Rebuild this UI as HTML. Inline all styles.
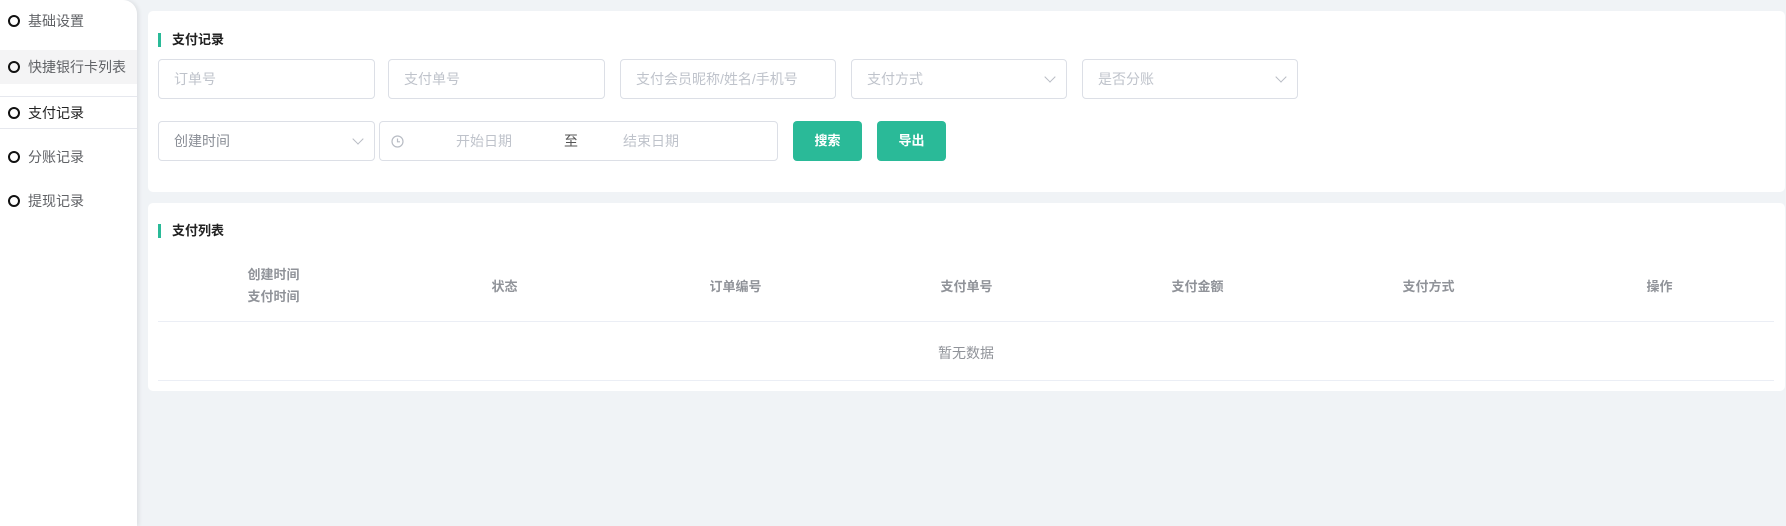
<!DOCTYPE html>
<html><head><meta charset="utf-8"><style>
*{box-sizing:border-box;margin:0;padding:0}
body{width:1786px;height:526px;background:#f0f3f6;font-family:"Liberation Sans","Noto Sans CJK SC",sans-serif;position:relative;overflow:hidden;font-size:14px}
.side{position:absolute;left:0;top:0;width:137px;height:526px;background:#fff;border-top-right-radius:14px;box-shadow:2px 0 4px rgba(0,0,0,.08)}
.it{position:absolute;left:0;width:137px;height:34px;line-height:34px;color:#606266;padding-left:28px}
.it i{position:absolute;left:8px;top:11px;width:12px;height:12px;border:2px solid #111;border-radius:50%}
.card{position:absolute;left:148px;width:1637px;background:#fff;border-radius:5px}
.tt{position:absolute;left:10px;font-weight:bold;color:#222;font-size:13px;padding-left:14px;line-height:14px}
.tt:before{content:"";position:absolute;left:0;top:0;width:3px;height:14px;background:#2aba98}
.in{position:absolute;height:40px;border:1px solid #dcdfe6;border-radius:4px;color:#bfc3cb;line-height:38px;padding-left:15px;font-size:14px}
.arr{position:absolute;right:12px;top:13px;width:8px;height:8px;border-right:1px solid #b8bcc4;border-bottom:1px solid #b8bcc4;transform:rotate(45deg)}
.btn{position:absolute;top:121px;height:40px;background:#2aba98;color:#fff;border-radius:4px;text-align:center;line-height:40px;font-size:13px;font-weight:bold}
.th{position:absolute;width:231px;text-align:center;color:#909399;font-weight:bold;font-size:13px}
.ln{position:absolute;left:10px;width:1616px;height:1px;background:#ebeef5}
</style></head><body>
<div class="side">
<div class="it" style="top:4px"><i></i>基础设置</div>
<div class="it" style="top:50px;background:#f4f4f5"><i></i>快捷银行卡列表</div>
<div style="position:absolute;left:0;top:96px;width:137px;height:1px;background:#e6e8ee"></div>
<div class="it" style="top:96px;color:#222"><i></i>支付记录</div>
<div style="position:absolute;left:0;top:128px;width:137px;height:1px;background:#e6e8ee"></div>
<div class="it" style="top:140px"><i></i>分账记录</div>
<div class="it" style="top:184px"><i></i>提现记录</div>
</div>
<div class="card" style="top:11px;height:181px">
<div class="tt" style="top:22px">支付记录</div>
</div>
<div class="in" style="left:158px;top:59px;width:217px">订单号</div>
<div class="in" style="left:388px;top:59px;width:217px">支付单号</div>
<div class="in" style="left:620px;top:59px;width:216px">支付会员昵称/姓名/手机号</div>
<div class="in" style="left:851px;top:59px;width:216px">支付方式<span class="arr"></span></div>
<div class="in" style="left:1082px;top:59px;width:216px">是否分账<span class="arr"></span></div>
<div class="in" style="left:158px;top:121px;width:217px;color:#8a8e96">创建时间<span class="arr"></span></div>
<div class="in" style="left:379px;top:121px;width:399px;padding:0">
<svg style="position:absolute;left:11px;top:13px" width="13" height="13" viewBox="0 0 13 13"><circle cx="6.5" cy="6.5" r="5.5" fill="none" stroke="#b8bcc4" stroke-width="1.2"/><path d="M6.5 3.5V6.8H9" fill="none" stroke="#b8bcc4" stroke-width="1.2"/></svg>
<span style="position:absolute;left:76px">开始日期</span>
<span style="position:absolute;left:184px;color:#555">至</span>
<span style="position:absolute;left:243px">结束日期</span>
</div>
<div class="btn" style="left:793px;width:69px">搜索</div>
<div class="btn" style="left:877px;width:69px">导出</div>
<div class="card" style="top:203px;height:188px">
<div class="tt" style="top:21px">支付列表</div>
<div class="th" style="left:10px;top:61px;line-height:22px">创建时间<br>支付时间</div>
<div class="th" style="left:241px;top:73px">状态</div>
<div class="th" style="left:472px;top:73px">订单编号</div>
<div class="th" style="left:703px;top:73px">支付单号</div>
<div class="th" style="left:934px;top:73px">支付金额</div>
<div class="th" style="left:1165px;top:73px">支付方式</div>
<div class="th" style="left:1396px;top:73px">操作</div>
<div class="ln" style="top:118px"></div>
<div style="position:absolute;left:10px;width:1616px;top:140px;text-align:center;color:#909399">暂无数据</div>
<div class="ln" style="top:177px"></div>
</div>
</body></html>
